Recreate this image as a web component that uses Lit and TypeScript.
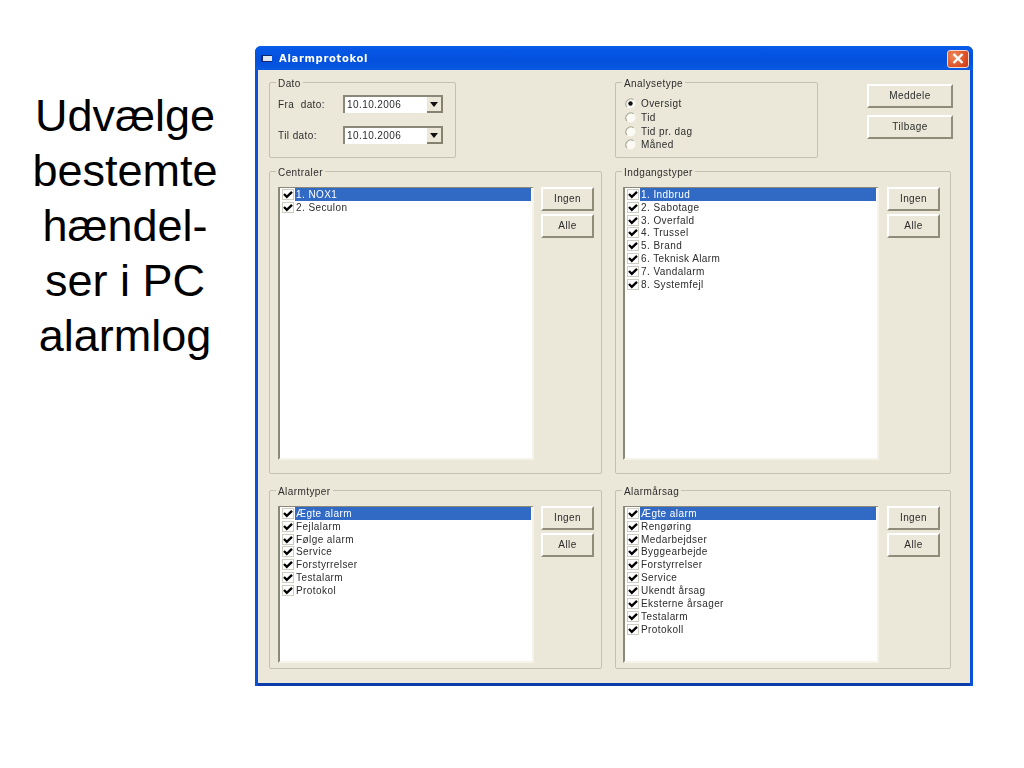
import { LitElement, html, svg, css } from "lit";
import { customElement } from "lit/decorators.js";

const check = html`<span class="cb"><svg width="10" height="9" viewBox="0 0 10 9"><path d="M1 4 L3.8 6.8 L9 1.8" fill="none" stroke="#000" stroke-width="2.3"/></svg></span>`;

const list = (items: string[], cls: string) => html`
  <div class="list ${cls}">
    ${items.map((t, i) => html`<div class="row">${check}<span class="txt ${i === 0 ? "sel" : ""}">${t}</span></div>`)}
  </div>
  <div class="side">
    <div class="btn small">Ingen</div>
    <div class="btn small">Alle</div>
  </div>`;

const date = (label: string) => html`
  <div class="dateRow">
    <span class="dl">${label}</span>
    <span class="date"><span class="dv">10.10.2006</span><span class="drop"><svg width="8" height="5" viewBox="0 0 8 5"><path d="M0 0H8L4 5Z" fill="#111"/></svg></span></span>
  </div>`;

const radio = (label: string, on = false) => html`
  <div class="radio">
    <svg width="11" height="11" viewBox="0 0 11 11">
      <circle cx="5.5" cy="5.5" r="5" fill="#fbfaf5"/>
      <path d="M1.9 9A5 5 0 0 1 8.5 1.7" fill="none" stroke="#a8a694" stroke-width="1.1"/>
      ${on ? svg`<circle cx="5.5" cy="5.5" r="2.2" fill="#111"/>` : ""}
    </svg>
    <span>${label}</span>
  </div>`;

@customElement("app-root")
export class AppRoot extends LitElement {
  static styles = css`
    :host { display: flex; width: 1024px; height: 768px; background: #fff; font-family: "Liberation Sans", Arial, sans-serif; overflow: hidden; }
    .slide { width: 250px; padding-top: 88px; box-sizing: border-box; text-align: center; font-size: 45px; line-height: 55px; color: #000; }
    .window { margin: 46px 0 0 5px; width: 718px; height: 640px; box-sizing: border-box; display: flex; flex-direction: column; border-radius: 6px 6px 0 0; overflow: hidden; background: #0a50d8; filter: blur(0.35px); }
    .title { height: 24px; flex: none; display: flex; align-items: center; background: linear-gradient(#0a5fe8 0%, #0657e6 15%, #0350dc 60%, #0a5ae2 100%); color: #fff; font: bold 10px "DejaVu Sans", sans-serif; padding: 0 4px 0 6px; letter-spacing: .66px; }
    .appicon { margin-right: 7px; flex: none; background: #dfe6ee; border-top: 1px solid #14286e; border-left: 2px solid #14286e; border-bottom: 1px solid #14286e; width: 9px; height: 5px; }
    .titletext { flex: 1; padding-top: 1px; }
    .close { width: 22px; height: 18px; margin-top: 1px; box-sizing: border-box; border: 1px solid #f0d8d0; border-radius: 3px; background: radial-gradient(circle at 30% 30%, #ee8a5c, #dc4a22 70%, #c63a18); display: flex; align-items: center; justify-content: center; }
    .client { flex: 1; margin: 0 3px 3px 3px; background: #ebe8d9; box-sizing: border-box; padding: 12px 19px 14px 11px; display: grid; grid-template-columns: 333px 336px; column-gap: 13px; grid-template-rows: 76px 303px 179px; row-gap: 13px; font-size: 10px; color: #2c2c2c; letter-spacing: .42px; box-shadow: 0 3px 0 #0a3cac; }
    .row3 { margin-top: 3px; height: 179px; }
    .group { position: relative; box-sizing: border-box; border: 1px solid #c4c1b0; border-radius: 2px; }
    .legend { position: absolute; top: -6px; left: 6px; padding: 0 2px; background: #ebe8d9; line-height: 13px; }
    .top { display: flex; }
    .dato { width: 187px; height: 76px; padding: 12px 0 0 8px; }
    .dateRow { display: flex; align-items: center; height: 18px; margin-bottom: 13px; }
    .dl { width: 65px; white-space: pre; }
    .date { width: 100px; height: 18px; box-sizing: border-box; background: #fff; border-top: 2px solid #8a8878; border-left: 2px solid #8a8878; display: flex; align-items: stretch; justify-content: space-between; }
    .dv { padding: 1px 0 0 2px; line-height: 13px; }
    .drop { width: 16px; box-sizing: border-box; background: #ebe8d9; border-right: 2px solid #85836f; border-bottom: 2px solid #85836f; display: flex; align-items: center; justify-content: center; }
    .ana { width: 203px; flex: none; height: 76px; padding: 14px 0 0 9px; }
    .radio { display: flex; align-items: center; gap: 5px; height: 13.7px; }
    .btns { margin-left: 49px; width: 86px; flex: none; display: flex; flex-direction: column; gap: 7px; padding-top: 2px; }
    .btn { box-sizing: border-box; background: #ebe8d9; display: flex; align-items: center; justify-content: center; border: 2px solid; border-color: #fff #8f8d7a #8f8d7a #fff; padding-bottom: 2px; }
    .big { height: 24px; width: 86px; }
    .small { height: 24px; width: 53px; }
    .lb { display: flex; padding: 15px 0 0 8px; gap: 7px; align-items: flex-start; }
    .right { padding-left: 7px; gap: 8px; }
    .list { width: 256px; box-sizing: border-box; background: #fff; border-style: solid; border-width: 1px 2px 2px 2px; border-color: #8a8878 #f6f4ea #f6f4ea #8a8878; padding: 0 1px 0 2px; }
    .h1 { height: 273px; }
    .h2 { height: 157px; }
    .row { display: flex; align-items: center; height: 12.85px; white-space: nowrap; }
    .cb { width: 12px; height: 11px; box-sizing: border-box; border: 1px solid #cfcdc2; display: flex; align-items: center; justify-content: center; flex: none; margin-right: 1px; overflow: hidden; }
    .txt { flex: 1; padding-left: 1px; line-height: 13px; height: 13px; }
    .sel { background: #316ac5; color: #fff; }
    .side { display: flex; flex-direction: column; gap: 3px; }
  `;

  render() {
    return html`
      <div class="slide">Udvælge<br />bestemte<br />hændel-<br />ser i PC<br />alarmlog</div>
      <div class="window">
        <div class="title">
          <span class="appicon"></span><span class="titletext">Alarmprotokol</span>
          <span class="close"><svg width="12" height="11" viewBox="0 0 12 11"><path d="M1.5 1 L10.5 10 M10.5 1 L1.5 10" stroke="#fff" stroke-width="2.4"/></svg></span>
        </div>
        <div class="client">
          <div class="group dato"><span class="legend">Dato</span>${date("Fra  dato:")}${date("Til dato:")}</div>
          <div class="top">
            <div class="group ana"><span class="legend">Analysetype</span>
              ${radio("Oversigt", true)}${radio("Tid")}${radio("Tid pr. dag")}${radio("Måned")}
            </div>
            <div class="btns"><div class="btn big">Meddele</div><div class="btn big">Tilbage</div></div>
          </div>
          <div class="group lb"><span class="legend">Centraler</span>${list(["1. NOX1", "2. Seculon"], "h1")}</div>
          <div class="group lb right"><span class="legend">Indgangstyper</span>${list(["1. Indbrud", "2. Sabotage", "3. Overfald", "4. Trussel", "5. Brand", "6. Teknisk Alarm", "7. Vandalarm", "8. Systemfejl"], "h1")}</div>
          <div class="group lb row3"><span class="legend">Alarmtyper</span>${list(["Ægte alarm", "Fejlalarm", "Følge alarm", "Service", "Forstyrrelser", "Testalarm", "Protokol"], "h2")}</div>
          <div class="group lb right row3"><span class="legend">Alarmårsag</span>${list(["Ægte alarm", "Rengøring", "Medarbejdser", "Byggearbejde", "Forstyrrelser", "Service", "Ukendt årsag", "Eksterne årsager", "Testalarm", "Protokoll"], "h2")}</div>
        </div>
      </div>
    `;
  }
}
